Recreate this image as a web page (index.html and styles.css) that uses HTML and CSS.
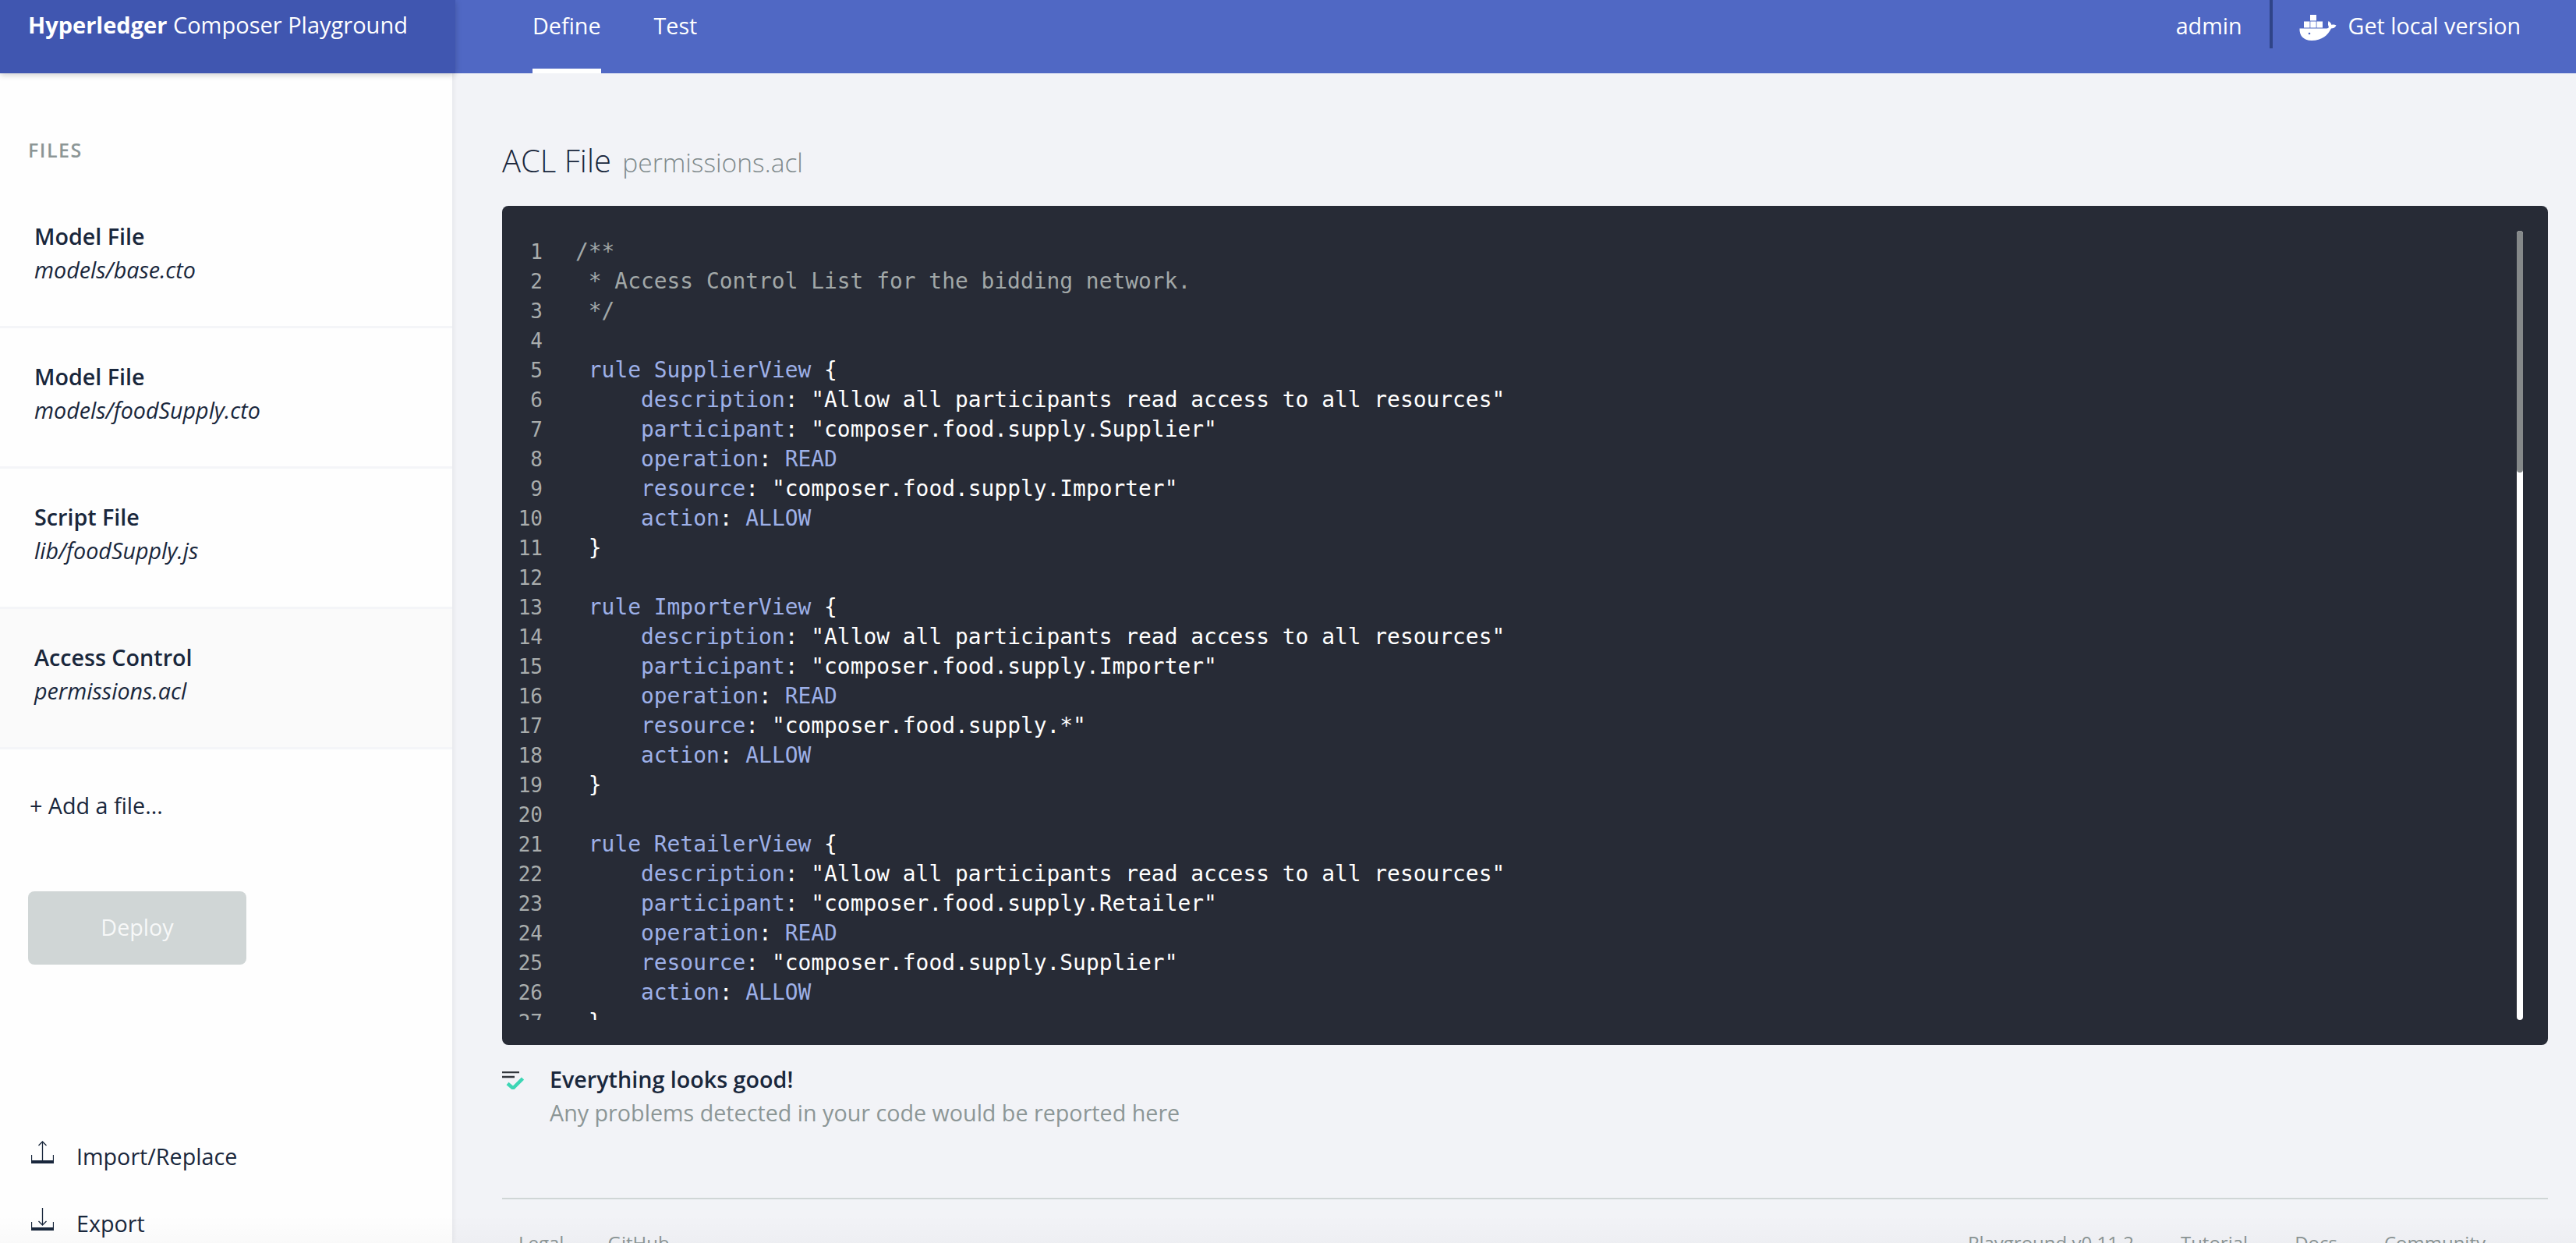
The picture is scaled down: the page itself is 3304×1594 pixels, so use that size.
FILE: index.html
```html
<!DOCTYPE html>
<html lang="en">
<head>
<meta charset="utf-8">
<title>Hyperledger Composer Playground</title>
<link rel="stylesheet" href="styles.css">
</head>
<body>
<div class="app">
  <header class="topbar">
    <div class="brand"><strong>Hyperledger</strong> Composer Playground</div>
    <nav class="tabs">
      <a class="tab active">Define</a>
      <a class="tab">Test</a>
    </nav>
    <div class="top-right">
      <span class="user">admin</span>
      <span class="local">
        <svg class="whale" viewBox="0 0 48 33" aria-hidden="true">
          <path class="fill" d="M14 0h8v7.500h-8zM6 8.500h7.500v8H6zM14.300 8.500h7.400v8h-7.400zM22.500 8.500H30v8h-7.500z"/>
          <path class="fill" d="M0.500 17.500H34c2 0 3-.5 4-1.500-1-2-1.500-5-.5-8 2 1 3.500 3 4 5 2-.7 4-.5 6 .5-1.500 3-4 4-6.500 4C37 26 29 33 16 33 5 33 0 26 .5 17.500z"/>
          <circle class="eye" cx="13" cy="24" r="1.300"/>
        </svg>
        Get local version
      </span>
    </div>
  </header>
  <div class="body">
    <aside class="sidebar">
      <h3 class="files-label">FILES</h3>
      <ul class="file-list">
        <li class="file"><b>Model File</b><i>models/base.cto</i></li>
        <li class="file"><b>Model File</b><i>models/foodSupply.cto</i></li>
        <li class="file"><b>Script File</b><i>lib/foodSupply.js</i></li>
        <li class="file selected"><b>Access Control</b><i>permissions.acl</i></li>
      </ul>
      <div class="add-file">+ Add a file...</div>
      <button class="deploy" type="button">Deploy</button>
      <div class="actions">
        <div class="action">
          <svg class="action-icon" viewBox="0 0 29 29" aria-hidden="true">
            <path class="thin" d="M14.500 25V1M9.500 6l5-5 5 5M.5 18v10M28.500 18v10"/>
            <path class="bar" d="M0 25h29v4H0z"/>
          </svg>
          <span>Import/Replace</span>
        </div>
        <div class="action">
          <svg class="action-icon" viewBox="0 0 29 29" aria-hidden="true">
            <path class="thin" d="M14.500 0v22M9.500 17l5 5 5-5M.5 18v10M28.500 18v10"/>
            <path class="bar" d="M0 25h29v4H0z"/>
          </svg>
          <span>Export</span>
        </div>
      </div>
    </aside>
    <main class="content">
      <h1 class="title">ACL File <small>permissions.acl</small></h1>
      <section class="editor">
        <div class="code">
<div class="ln"><span class="no">1</span><code class="com">/**</code></div>
<div class="ln"><span class="no">2</span><code class="com"> * Access Control List for the bidding network.</code></div>
<div class="ln"><span class="no">3</span><code class="com"> */</code></div>
<div class="ln"><span class="no">4</span><code></code></div>
<div class="ln"><span class="no">5</span><code> <em>rule SupplierView</em> {</code></div>
<div class="ln"><span class="no">6</span><code>     <em>description</em>: "Allow all participants read access to all resources"</code></div>
<div class="ln"><span class="no">7</span><code>     <em>participant</em>: "composer.food.supply.Supplier"</code></div>
<div class="ln"><span class="no">8</span><code>     <em>operation</em>: <em>READ</em></code></div>
<div class="ln"><span class="no">9</span><code>     <em>resource</em>: "composer.food.supply.Importer"</code></div>
<div class="ln"><span class="no">10</span><code>     <em>action</em>: <em>ALLOW</em></code></div>
<div class="ln"><span class="no">11</span><code> }</code></div>
<div class="ln"><span class="no">12</span><code></code></div>
<div class="ln"><span class="no">13</span><code> <em>rule ImporterView</em> {</code></div>
<div class="ln"><span class="no">14</span><code>     <em>description</em>: "Allow all participants read access to all resources"</code></div>
<div class="ln"><span class="no">15</span><code>     <em>participant</em>: "composer.food.supply.Importer"</code></div>
<div class="ln"><span class="no">16</span><code>     <em>operation</em>: <em>READ</em></code></div>
<div class="ln"><span class="no">17</span><code>     <em>resource</em>: "composer.food.supply.*"</code></div>
<div class="ln"><span class="no">18</span><code>     <em>action</em>: <em>ALLOW</em></code></div>
<div class="ln"><span class="no">19</span><code> }</code></div>
<div class="ln"><span class="no">20</span><code></code></div>
<div class="ln"><span class="no">21</span><code> <em>rule RetailerView</em> {</code></div>
<div class="ln"><span class="no">22</span><code>     <em>description</em>: "Allow all participants read access to all resources"</code></div>
<div class="ln"><span class="no">23</span><code>     <em>participant</em>: "composer.food.supply.Retailer"</code></div>
<div class="ln"><span class="no">24</span><code>     <em>operation</em>: <em>READ</em></code></div>
<div class="ln"><span class="no">25</span><code>     <em>resource</em>: "composer.food.supply.Supplier"</code></div>
<div class="ln"><span class="no">26</span><code>     <em>action</em>: <em>ALLOW</em></code></div>
<div class="ln"><span class="no">27</span><code> }</code></div>
        </div>
        <div class="scrollbar"><div class="thumb"></div></div>
      </section>
      <section class="status">
        <svg class="status-icon" viewBox="0 0 28 23" aria-hidden="true">
          <path class="lines" d="M0 1h22M0 7h16"/>
          <path class="check" d="M7 15.500l7 6L26.500 9"/>
        </svg>
        <div class="status-text">
          <b>Everything looks good!</b>
          <span>Any problems detected in your code would be reported here</span>
        </div>
      </section>
      <footer class="footer">
        <div class="foot-left"><span>Legal</span><span>GitHub</span></div>
        <div class="foot-right"><span>Playground v0.11.2</span><span>Tutorial</span><span>Docs</span><span>Community</span></div>
      </footer>
    </main>
  </div>
  <div class="bottom-fade"></div>
</div>
</body>
</html>
```

FILE: styles.css
```css
* { box-sizing: border-box; }
html, body { margin: 0; height: 100%; overflow: hidden; }
body {
  font-family: "Open Sans", "Noto Sans", sans-serif;
  font-size: 28.700px;
  color: #19273c;
  background: #f2f3f7;
}
.app { position: relative; height: 1594px; overflow: hidden; display: flex; flex-direction: column; }

/* top bar */
.topbar {
  flex: none;
  height: 94px;
  display: flex;
  background: #5068c4;
  color: #fff;
}
.brand {
  position: relative;
  z-index: 2;
  width: 584px;
  padding: 12px 0 0 36px;
  background: #4056b0;
  box-shadow: 0 2px 8px rgba(0, 0, 0, .2);
  font-size: 29px;
  line-height: 40px;
  font-weight: 400;
}
.brand strong { font-weight: 700; }
.tabs { display: flex; gap: 68px; padding-left: 99px; }
.tab { display: block; height: 94px; padding-top: 13px; line-height: 40px; }
.tab.active { border-bottom: 6px solid #fff; }
.top-right { margin-left: auto; display: flex; height: 62px; align-items: flex-start; padding-right: 71px; }
.user { padding: 13px 35px 0 0; line-height: 40px; }
.local {
  height: 62px;
  display: flex;
  gap: 15px;
  border-left: 4px solid #2f4488;
  padding: 13px 0 0 34px;
  line-height: 40px;
}
.whale { width: 48px; height: 33px; margin-top: 6px; }
.fill { fill: #fff; }
.eye { fill: #5068c4; }

/* layout */
.body { flex: 1; display: flex; min-height: 0; }
.sidebar {
  flex: none;
  width: 580px;
  background: #fefefe;
  box-shadow: 2px 0 6px rgba(0, 0, 0, .05);
  display: flex;
  flex-direction: column;
}
.files-label {
  margin: 0;
  padding: 82px 0 0 36px;
  height: 147px;
  font-size: 25px;
  line-height: 32px;
  font-weight: 600;
  color: #8c9696;
  letter-spacing: 1.500px;
}
.file-list { list-style: none; margin: 0; padding: 0; }
.file {
  height: 180px;
  padding: 40px 0 0 44px;
  border-bottom: 3px solid #f4f5f8;
  display: flex;
  flex-direction: column;
  line-height: 43px;
}
.file b { font-weight: 600; }
.file i { font-style: italic; font-weight: 400; }
.file.selected { background: #fafafa; }
.add-file { padding: 52px 0 0 38px; line-height: 40px; }
.deploy {
  margin: 90px 0 0 36px;
  width: 280px;
  height: 94px;
  border: 0;
  border-radius: 8px;
  background: #d0d6d6;
  color: rgba(255, 255, 255, .85);
  font: inherit;
  padding: 0 0 3px;
}
.actions { margin-top: 226px; padding-left: 40px; display: flex; flex-direction: column; gap: 46px; }
.action { display: flex; gap: 29px; height: 40px; line-height: 40px; }
.action-icon { flex: none; width: 29px; height: 29px; }
.thin { fill: none; stroke: #19273c; stroke-width: 1.300; }
.bar { fill: #19273c; }

/* content */
.content { flex: 1; min-width: 0; padding: 0 36px 0 64px; }
.title {
  margin: 0;
  padding-top: 87px;
  height: 170px;
  font-size: 40px;
  line-height: 50px;
  font-weight: 300;
  color: #19273c;
}
.title small { margin-left: 4px; font-size: 33.500px; font-weight: 300; color: #7f8a8c; }
.editor {
  position: relative;
  height: 1076px;
  padding: 32px 0;
  background: #272b36;
  border-radius: 8px;
}
.code { height: 1012px; overflow: hidden; padding-top: 8px; }
.ln { display: flex; height: 38px; line-height: 38px; }
.no { flex: none; width: 52px; margin-right: 42px; text-align: right; font-family: "DejaVu Sans Mono", monospace; font-size: 26px; color: #a9adad; }
code {
  font-family: "DejaVu Sans Mono", monospace;
  font-size: 27.900px;
  white-space: pre;
  color: #fff;
}
code.com { color: #a2a8a8; }
code em { font-style: normal; color: #9db0e8; }
.scrollbar { position: absolute; top: 32px; right: 32px; width: 8px; height: 1012px; background: #fff; border-radius: 4px; overflow: hidden; }
.thumb { height: 310px; background: #85898a; border-radius: 0 0 4px 4px; }

.status { display: flex; gap: 33px; padding-top: 22px; height: 196px; }
.status-icon { flex: none; width: 28px; height: 23px; margin-top: 12px; }
.lines { fill: none; stroke: #33373d; stroke-width: 2.500; }
.check { fill: none; stroke: #3dd6b5; stroke-width: 4.500; }
.status-text { display: flex; flex-direction: column; line-height: 43px; }
.status-text b { font-weight: 600; }
.status-text span { color: #8c9696; font-weight: 400; }

.footer {
  border-top: 2px solid #d0d6d6;
  display: flex;
  justify-content: space-between;
  padding: 40px 80px 0 21px;
  font-size: 24px;
  line-height: 32px;
  color: #8c9696;
}
.foot-left, .foot-right { display: flex; gap: 56px; }
.foot-right { gap: 60px; }

.bottom-fade {
  position: absolute;
  left: 0;
  right: 0;
  bottom: 0;
  height: 36px;
  background: linear-gradient(rgba(0, 0, 0, 0), rgba(0, 0, 0, .02));
  pointer-events: none;
}
```
